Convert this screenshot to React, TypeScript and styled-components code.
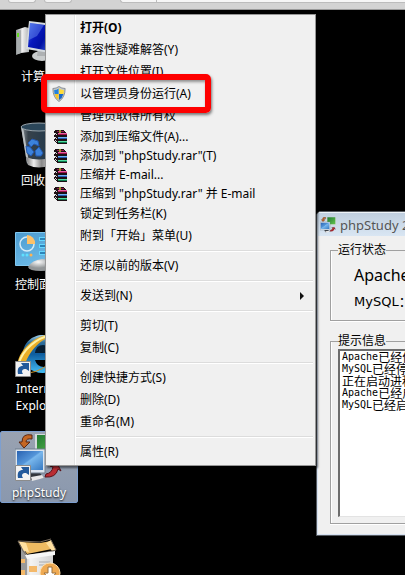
import React from "react";
import styled, { createGlobalStyle, css } from "styled-components";

const uiFont = `"Noto Sans", "Noto Sans CJK SC", sans-serif`;

const GlobalStyle = createGlobalStyle`
  * { box-sizing: border-box; }
  body { margin: 0; background: #000; font-family: ${uiFont}; font-size: 12px; }
  button { font: inherit; color: inherit; border: 0; padding: 0; background: none; }
`;

const Screen = styled.div`
  display: flex;
  flex-direction: column;
  height: 100vh;
  overflow: hidden;
`;

const TopBar = styled.header`
  display: flex;
  flex: none;
  height: 10px;
  padding-left: 8px;
  background: #d3d3d3;
  border-bottom: 1px solid #999;
`;

const TopButton = styled.button<{ $gap: number }>`
  width: 28px;
  height: 3px;
  margin-right: ${(p) => p.$gap}px;
  background: #f3f3f3;
  border: 1px solid #bcbcbc;
  border-top: 0;
  border-radius: 0 0 3px 3px;
`;

const AddressBar = styled.div`
  flex: 1;
  height: 3px;
  background: #f6f6f6;
  border: 1px solid #bcbcbc;
  border-width: 0 0 1px 1px;
  border-radius: 0 0 0 3px;
  padding-left: 35px;
  &::before {
    content: "";
    display: block;
    width: 1px;
    height: 2px;
    background: #bcbcbc;
  }
`;

const Desktop = styled.main`
  position: relative;
  flex: 1;
  min-height: 0;
  overflow: hidden;
  padding-top: 5px;
`;

const IconGrid = styled.div`
  display: grid;
  grid-template-columns: 78px;
  grid-auto-rows: 104px;
  align-items: start;
`;

const Shortcut = styled.button<{ $selected?: boolean }>`
  display: flex;
  flex-direction: column;
  align-items: center;
  gap: 2px;
  padding: 2px 0 1px;
  color: #fff;
  line-height: 17px;
  border: 1px solid transparent;
  border-radius: 2px;
  text-shadow: 0 1px 2px #000;
  ${(p) =>
    p.$selected &&
    css`
      background: linear-gradient(#99a2b1, #8a98ae);
      border-color: #7d9fd0;
    `}
  svg { display: block; }
`;

const Menu = styled.div`
  position: absolute;
  left: 45px;
  top: 4px;
  width: 271px;
  padding: 2px;
  border: 1px solid #979797;
  background: linear-gradient(90deg, #f1f1f1 28px, #e2e3e3 28px, #e2e3e3 29px, #fff 29px, #fff 30px, #f0f0f0 30px);
  background-origin: padding-box;
  box-shadow: 2px 2px 2px rgba(0, 0, 0, 0.5);
  z-index: 2;
`;

const MenuItem = styled.button<{ $compact?: boolean; $bold?: boolean }>`
  position: relative;
  display: grid;
  grid-template-columns: 32px 1fr 13px;
  align-items: center;
  width: 100%;
  height: ${(p) => (p.$compact ? 19 : 22)}px;
  text-align: left;
  line-height: 16px;
  white-space: nowrap;
  color: #000;
  font-weight: ${(p) => (p.$bold ? 700 : 400)};
`;

const IconSlot = styled.span`
  display: flex;
  padding-left: 4px;
`;

const Separator = styled.hr`
  height: 2px;
  margin: 3px 0 3px 28px;
  border: 0;
  border-top: 1px solid #dcdcdc;
  background: #fff;
`;

const Highlight = styled.span`
  position: absolute;
  left: -7px;
  top: -9px;
  width: 170px;
  height: 39px;
  border: 6px solid #fe0000;
  border-radius: 5px;
  box-shadow: 1px 2px 3px rgba(0, 0, 0, 0.5), inset 1px 2px 3px rgba(0, 0, 0, 0.4);
  z-index: 1;
  pointer-events: none;
`;

const Window = styled.section`
  position: absolute;
  left: 316px;
  right: -120px;
  top: 201px;
  border: 1px solid #555a60;
  border-radius: 5px 0 0 0;
  background: #f0f0f0;
  box-shadow: inset 1px -1px 0 #d5e0f0;
  overflow: hidden;
`;

const TitleBar = styled.div`
  display: flex;
  align-items: center;
  gap: 4px;
  height: 24px;
  padding-left: 3px;
  border-top: 1px solid #eef3f8;
  background: linear-gradient(#c0cfdf, #d9e6f3);
  color: #555;
  font-size: 13px;
  line-height: 18px;
  white-space: nowrap;
`;

const WindowBody = styled.div`
  padding: 6px 13px 11px;
`;

const Group = styled.fieldset`
  min-width: 0;
  margin: 0 0 12px;
  padding: 0 7px 6px;
  border: 1px solid #a0a0a0;
  box-shadow: inset 1px 0 0 #fff, 0 1px 0 #fff;
  &:last-child { margin-bottom: 0; }
`;

const Legend = styled.legend`
  padding: 0;
  line-height: 16px;
`;

const Status = styled.p<{ $wide?: boolean }>`
  margin: 0;
  padding-left: 16px;
  height: 28px;
  line-height: ${(p) => (p.$wide ? 32 : 34)}px;
  font-family: ${(p) => (p.$wide ? `"DejaVu Sans", "Noto Sans CJK SC", sans-serif` : uiFont)};
  font-size: ${(p) => (p.$wide ? 13 : 16)}px;
  white-space: nowrap;
`;

const Log = styled.ul`
  height: 168px;
  margin: 0;
  padding: 0 2px;
  list-style: none;
  background: #fff;
  border: 2px solid #6d6d6d;
  border-right: 0;
  border-bottom: 1px solid #e3e3e3;
  overflow: hidden;
`;

const LogLine = styled.li`
  display: flex;
  height: 12px;
  line-height: 12px;
  font-family: "Noto Sans CJK SC", sans-serif;
  white-space: nowrap;
`;

const Mono = styled.span`
  font: 10px/12px "DejaVu Sans Mono", monospace;
`;

const LinkBadge = () => (
  <g>
    <path d="M.5 31.5h15v15h-15z" fill="#f2f2f2" stroke="#8b8b8b" />
    <path d="M3 44c-1-6 1-8 5-8L6 33h8v8l-3-2c-4 0-5 2-3 5z" fill="#235a9c" />
  </g>
);

const ComputerIcon = () => (
  <svg width="48" height="48" viewBox="0 0 48 48">
    <defs>
      <linearGradient id="scr" x2="1" y2=".5">
        <stop stopColor="#3d62e8" />
        <stop offset=".35" stopColor="#0718bd" />
        <stop offset=".6" stopColor="#0010a4" />
        <stop offset="1" stopColor="#527be6" />
      </linearGradient>
      <linearGradient id="tower" x2="1">
        <stop stopColor="#8f9496" />
        <stop offset=".5" stopColor="#eee" />
        <stop offset="1" stopColor="#b0b4b6" />
      </linearGradient>
    </defs>
    <path d="M1 12l9-3 4 1v24l-8 1-5 2z" fill="url(#tower)" />
    <path d="M2 13l4-1v23l-4 1z" fill="#a8adae" />
    <path d="M3 15v4" stroke="#69da28" strokeWidth="2" />
    <ellipse cx="27" cy="38" rx="10" ry="5" fill="#c9cccd" />
    <path d="M23 31h9l1 7H22z" fill="#aeb1b3" />
    <path d="M14 3l33 4v30L11 31z" fill="#d5dbe0" />
    <path d="M15 5l30 4v26L13 29z" fill="url(#scr)" />
    <path d="M15 5l14 2-7 11-8 4z" fill="#7296f5" opacity=".45" />
  </svg>
);

const BinIcon = () => (
  <svg width="48" height="48" viewBox="0 0 48 48">
    <defs>
      <linearGradient id="bin" x2="1">
        <stop stopColor="#92999e" />
        <stop offset=".2" stopColor="#37424b" />
        <stop offset=".7" stopColor="#263a4b" />
        <stop offset="1" stopColor="#abb2b7" />
      </linearGradient>
      <linearGradient id="binfoot" x2="1">
        <stop stopColor="#777" />
        <stop offset=".3" stopColor="#eee" />
        <stop offset=".6" stopColor="#888" />
        <stop offset="1" stopColor="#ddd" />
      </linearGradient>
    </defs>
    <path d="M6 4l6 38q12 6 24 0l6-38z" fill="url(#bin)" />
    <path d="M7 5l6 36" stroke="#b9bfc2" strokeWidth="2" />
    <path d="M11 35q13 5 26 0l-2 8q-11 5-22 0z" fill="url(#binfoot)" />
    <ellipse cx="24" cy="5" rx="18" ry="4" fill="#2b4659" stroke="#9aa5ac" />
    <path d="M13 21l4-4 6 2 1 5-5-2-3 3zM11 24l4 1 4 5-3 4-4-3zM20 29l4-4 4 6-2 3h-5z" fill="#3b82dc" stroke="#2458ae" />
  </svg>
);

const ControlIcon = () => (
  <svg width="48" height="48" viewBox="0 0 48 48">
    <defs>
      <linearGradient id="panel" x2=".5" y2="1">
        <stop stopColor="#4c9bcf" />
        <stop offset="1" stopColor="#6cbbe8" />
      </linearGradient>
      <radialGradient id="mouse" cx=".4" cy=".25">
        <stop stopColor="#fafafa" />
        <stop offset="1" stopColor="#929698" />
      </radialGradient>
    </defs>
    <path d="M.5 6.500h47v33H.5z" fill="url(#panel)" stroke="#80c7ef" />
    <circle cx="12" cy="18" r="7" fill="none" stroke="#d3ecfa" strokeWidth="1.500" />
    <path d="M12 18v-9a8 8 0 0 1 8 9z" fill="#ffc269" />
    <path d="M24 13h20M24 20h20M24 27h20" stroke="#67d8ff" strokeWidth="4" />
    <path d="M25 13h18M25 20h18M25 27h18" stroke="#2d85ba" strokeWidth="2" />
    <circle cx="8" cy="29" r="1.500" fill="#5fe0ff" />
    <circle cx="12" cy="29" r="1.500" fill="#5fe0ff" />
    <circle cx="16" cy="29" r="1.500" fill="#ffb351" />
    <path d="M13 41q4-7 14-8 11 0 12 6-1 6-13 6-12 0-13-4z" fill="url(#mouse)" />
  </svg>
);

const ExplorerIcon = () => (
  <svg width="48" height="48" viewBox="0 0 48 48">
    <defs>
      <linearGradient id="ie" y2="1" x2="0">
        <stop stopColor="#a6d2e8" />
        <stop offset=".2" stopColor="#2c6c9a" />
        <stop offset=".5" stopColor="#0e5d9e" />
        <stop offset="1" stopColor="#45bdf5" />
      </linearGradient>
    </defs>
    <path d="M44 30H20q2 7 9 7 6 0 8-3h7q-5 9-16 9C16 43 8 35 8 24S17 5 28 5s18 8 16 25z" fill="url(#ie)" />
    <path d="M20 23q1-8 8-8t8 8z" fill="#061d31" />
    <path d="M2 38C2 20 22 2 43 4 27 7 13 21 9 38q-5 3-7 0z" fill="#e9ae26" />
    <path d="M4 33C8 19 22 8 36 5" fill="none" stroke="#fff0a2" strokeWidth="2" />
    <path d="M14 43q14-2 25-14" fill="none" stroke="#c98f20" />
    <LinkBadge />
  </svg>
);

const StudyIcon = ({ size, link }: { size: number; link?: boolean }) => (
  <svg width={size} height={size} viewBox="0 0 48 48">
    <defs>
      <linearGradient id="blueScreen" x2="1" y2="1">
        <stop stopColor="#2962b1" />
        <stop offset=".45" stopColor="#5495d9" />
        <stop offset=".5" stopColor="#79b7ec" />
        <stop offset="1" stopColor="#3679c2" />
      </linearGradient>
      <linearGradient id="greenScreen" x2="1" y2="1">
        <stop stopColor="#207a34" />
        <stop offset="1" stopColor="#65c44e" />
      </linearGradient>
    </defs>
    <path d="M20 0h28v25H20z" fill="#d4d9dc" />
    <path d="M22 1h24v21H22z" fill="url(#greenScreen)" />
    <path d="M17 1Q7-1 7 8H4l5 6 6-6h-4q0-4 6-3z" fill="#c56724" stroke="#5a2713" />
    <path d="M31 40q6-1 7-7l-3-1 8-1 3 6-3-2q-2 9-13 8z" fill="#b92d34" stroke="#5b1118" />
    <path d="M13 39h12l4 5-13 2z" fill="#32363b" />
    <path d="M0 15h30v24H0z" fill="#dce5ef" stroke="#6e7c8c" />
    <path d="M2 17h26v19H2z" fill="url(#blueScreen)" />
    <path d="M16 43l11-2 2 3-12 3z" fill="#e8e8e8" />
    {link && <LinkBadge />}
  </svg>
);

const PackageIcon = () => (
  <svg width="48" height="48" viewBox="0 0 48 48">
    <defs>
      <linearGradient id="box" x2="1">
        <stop stopColor="#ababab" />
        <stop offset=".3" stopColor="#f4f4f4" />
        <stop offset="1" stopColor="#d2d2d2" />
      </linearGradient>
    </defs>
    <path d="M6 8l6 9 26-2v33H6z" fill="url(#box)" />
    <path d="M6 8l6 9v31H6z" fill="#999" />
    <path d="M5 4l20 1 11-2 1 8-25 5z" fill="#eebb62" />
    <path d="M3 3l8 2 3 9-5-1zM36 2l5 10-4 1-6-8z" fill="#ffe0a0" />
    <path d="M3 3l5 10 4 5 20-4 9-2-5-10M3 3l22 1 11-3" fill="none" stroke="#75695b" />
    <path d="M10 17l30-4v4l-28 4z" fill="#f7f7f7" />
    <path d="M6 21h4v4H6zM14 28h8v6h-8zM6 32h4v8H6z" fill="#f4b96a" />
    <path d="M24 24h11M24 27h8" stroke="#aaa" />
    <circle cx="35" cy="35" r="10" fill="#efaa53" stroke="#ffdfab" />
    <path d="M33 29h4v6h4l-6 7-6-7h4z" fill="#fff" stroke="#9b7341" />
  </svg>
);

const ShieldIcon = () => (
  <svg width="14" height="16" viewBox="0 0 16 16" preserveAspectRatio="none">
    <path d="M8 .5Q11 2.500 15 2.500q0 9-7 13-7-4-7-13Q5 2.500 8 .5z" fill="#c5c9cb" stroke="#858d91" />
    <path d="M7.500 2.500v5.500H3Q2.500 6 2.500 4q3 0 5-1.500z" fill="#2482dc" />
    <path d="M8 2.500V8h5q.5-2 .5-4Q11 4 8 2.500z" fill="#ffdc38" />
    <path d="M3 8h4.500v6Q4 12 3 8z" fill="#f7c526" />
    <path d="M8 8h5q-1 4-5 6z" fill="#1867ca" />
  </svg>
);

const ArchiveIcon = () => (
  <svg width="16" height="14" viewBox="0 0 16 14" shapeRendering="crispEdges">
    <path d="M3 0h8l4 3v11H5L2 11V9l1-1-1-1V5l1-1-1-1z" fill="#1c1015" />
    <path d="M4 1h7l2 1H5z" fill="#8f1745" />
    <path d="M6 3h9v1H6z" fill="#e860a5" />
    <path d="M6 4h9v1H6z" fill="#9c1249" />
    <path d="M6 7h9v1H6z" fill="#6fb4f5" />
    <path d="M6 8h9v1H6z" fill="#2558b0" />
    <path d="M6 11h9v1H6z" fill="#50dca0" />
    <path d="M6 12h9v1H6z" fill="#0a7a4c" />
    <path d="M3 3l2 2M3 7l2 2M3 10l2 2" stroke="#d8d8d8" />
    <path d="M7 0h2v3H7z" fill="#99912a" />
  </svg>
);

const ArrowIcon = () => (
  <svg width="5" height="8" viewBox="0 0 5 8">
    <path d="M0 0l4 4-4 4z" fill="#111" />
  </svg>
);

type Entry =
  | "separator"
  | { label: string; icon?: "shield" | "archive"; bold?: boolean; submenu?: boolean; marked?: boolean };

const entries: Entry[] = [
  { label: "打开(O)", bold: true },
  { label: "兼容性疑难解答(Y)" },
  { label: "打开文件位置(I)" },
  { label: "以管理员身份运行(A)", icon: "shield", marked: true },
  { label: "管理员取得所有权" },
  { label: "添加到压缩文件(A)...", icon: "archive" },
  { label: '添加到 "phpStudy.rar"(T)', icon: "archive" },
  { label: "压缩并 E-mail...", icon: "archive" },
  { label: '压缩到 "phpStudy.rar" 并 E-mail', icon: "archive" },
  { label: "锁定到任务栏(K)" },
  { label: "附到「开始」菜单(U)" },
  "separator",
  { label: "还原以前的版本(V)" },
  "separator",
  { label: "发送到(N)", submenu: true },
  "separator",
  { label: "剪切(T)" },
  { label: "复制(C)" },
  "separator",
  { label: "创建快捷方式(S)" },
  { label: "删除(D)" },
  { label: "重命名(M)" },
  "separator",
  { label: "属性(R)" },
];

const logLines = [
  ["Apache", "已经停止"],
  ["MySQL", "已经停止"],
  ["", "正在启动进程"],
  ["Apache", "已经启动"],
  ["MySQL", "已经启动"],
];

export default function App() {
  return (
    <Screen>
      <GlobalStyle />
      <TopBar>
        <TopButton $gap={8} aria-label="后退" />
        <TopButton $gap={48} aria-label="前进" />
        <AddressBar />
      </TopBar>
      <Desktop>
        <IconGrid>
          <Shortcut><ComputerIcon />计算机</Shortcut>
          <Shortcut><BinIcon />回收站</Shortcut>
          <Shortcut><ControlIcon />控制面板</Shortcut>
          <Shortcut><ExplorerIcon /><span>Internet<br />Explorer</span></Shortcut>
          <Shortcut $selected><StudyIcon size={48} link />phpStudy</Shortcut>
          <Shortcut aria-label="安装包"><PackageIcon /></Shortcut>
        </IconGrid>

        <Window>
          <TitleBar><StudyIcon size={16} />phpStudy 2016</TitleBar>
          <WindowBody>
            <Group>
              <Legend>运行状态</Legend>
              <Status>Apache：</Status>
              <Status $wide>MySQL：</Status>
            </Group>
            <Group>
              <Legend>提示信息</Legend>
              <Log>
                {logLines.map(([name, text], i) => (
                  <LogLine key={i}>{name && <Mono>{name}</Mono>}{text}</LogLine>
                ))}
              </Log>
            </Group>
          </WindowBody>
        </Window>

        <Menu role="menu">
          {entries.map((entry, i) =>
            entry === "separator" ? (
              <Separator key={i} />
            ) : (
              <MenuItem key={i} role="menuitem" $bold={entry.bold} $compact={entry.icon === "archive"}>
                <IconSlot>
                  {entry.icon === "shield" && <ShieldIcon />}
                  {entry.icon === "archive" && <ArchiveIcon />}
                </IconSlot>
                <span>{entry.label}</span>
                {entry.submenu && <ArrowIcon />}
                {entry.marked && <Highlight />}
              </MenuItem>
            )
          )}
        </Menu>
      </Desktop>
    </Screen>
  );
}
